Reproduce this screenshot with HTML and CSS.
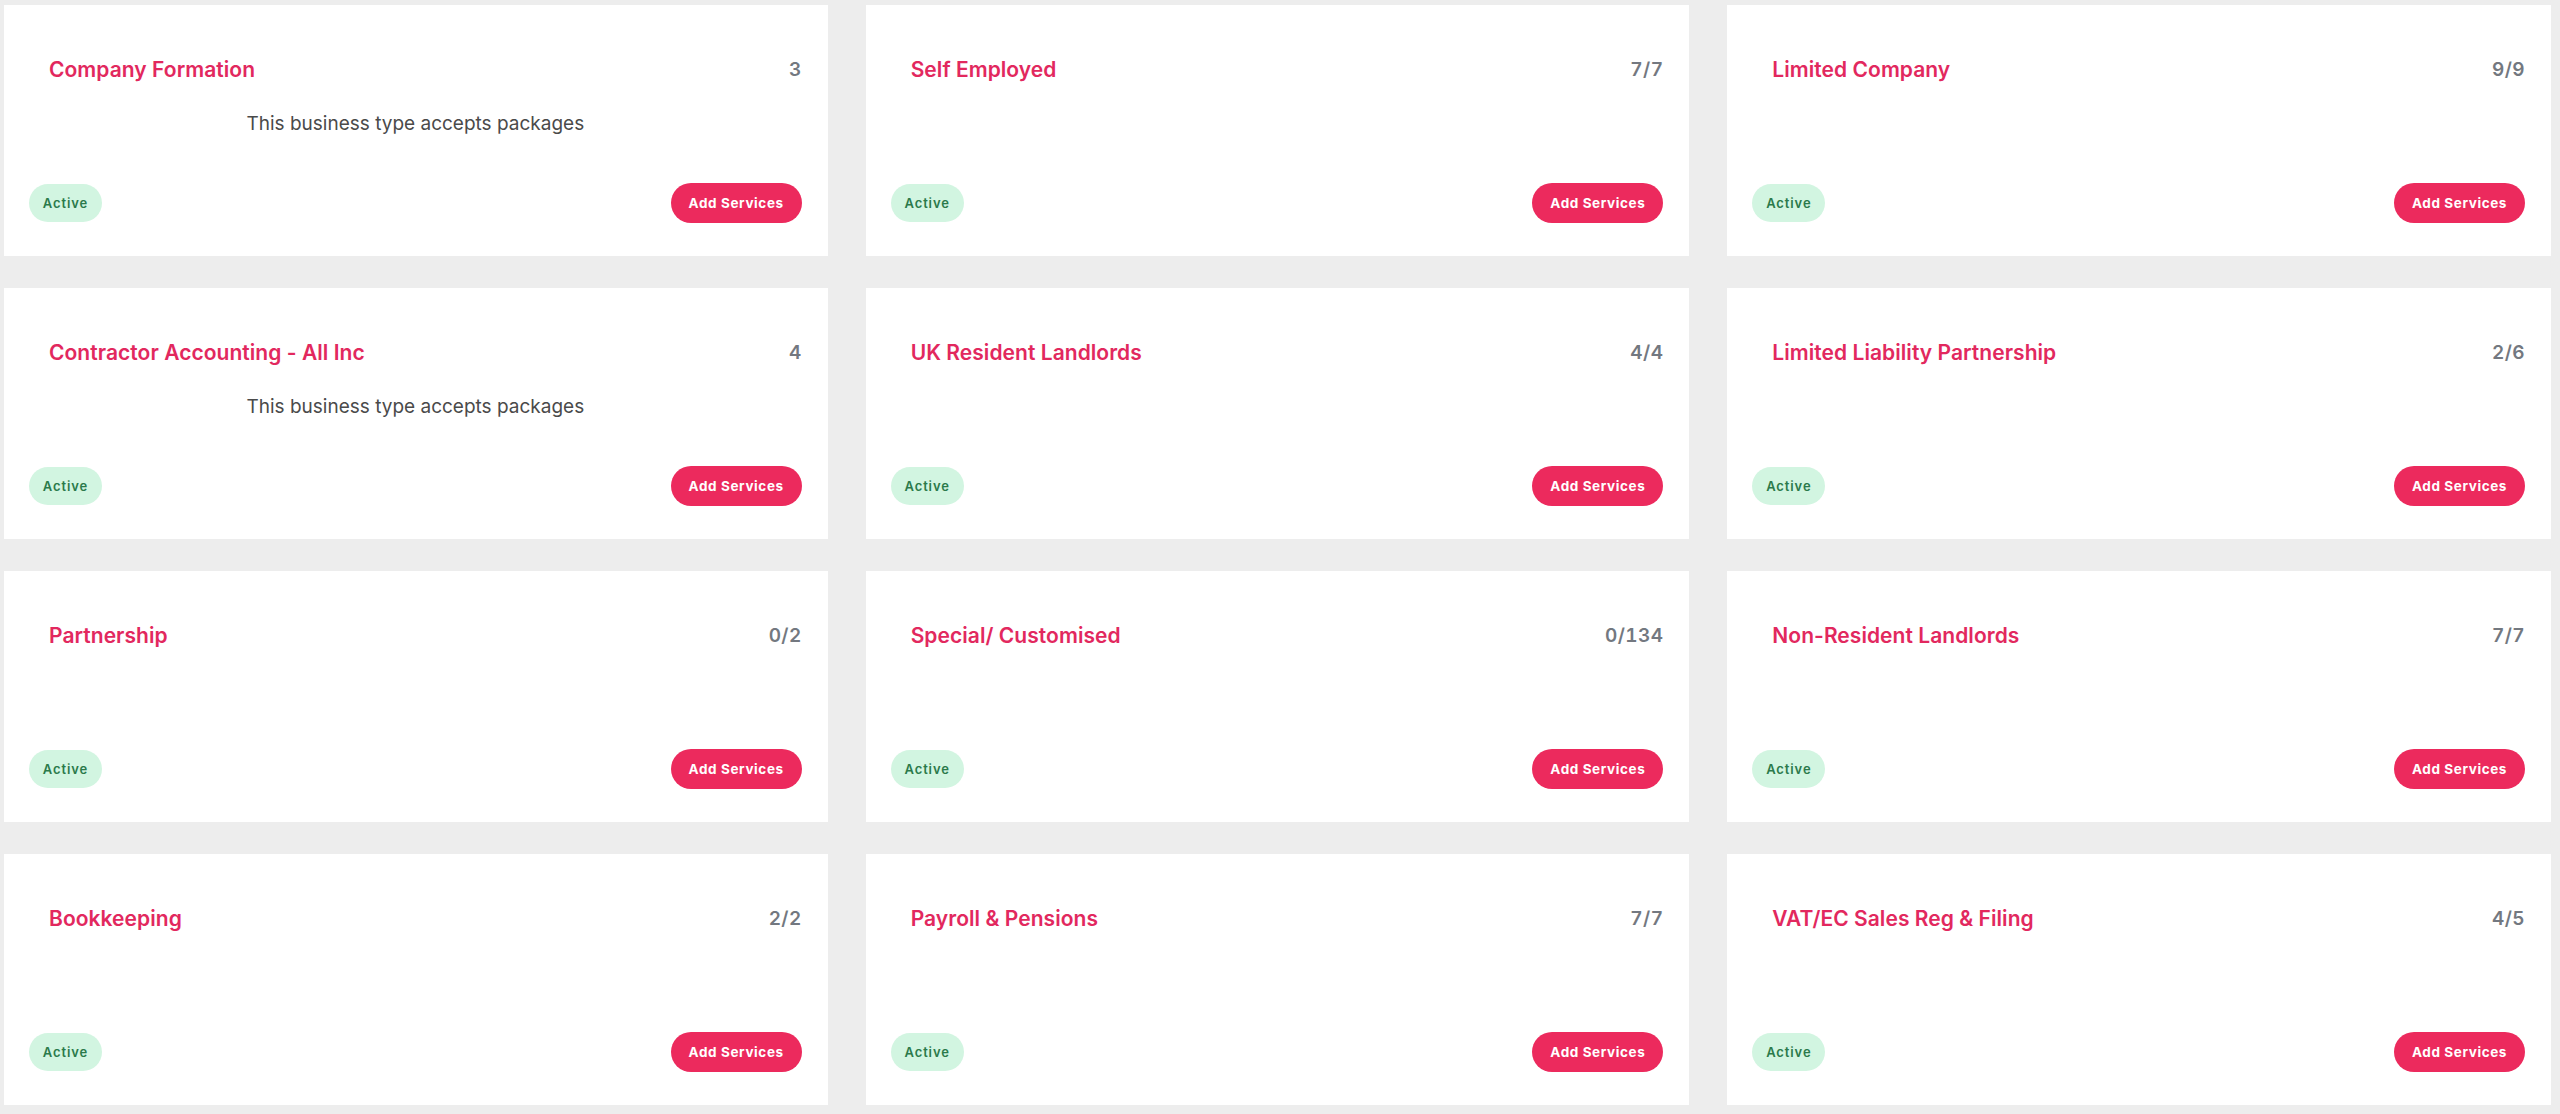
FILE: index.html
```html
<!DOCTYPE html>
<html lang="en">
<head>
<meta charset="utf-8">
<title>Business Types</title>
<link rel="stylesheet" href="styles.css">
</head>
<body>
<main class="grid">
  <section class="card">
    <div class="card-head"><h3 class="title">Company Formation</h3><span class="count">3</span></div>
    <p class="desc">This business type accepts packages</p>
    <div class="card-foot"><span class="pill">Active</span><button class="btn">Add Services</button></div>
  </section>
  <section class="card">
    <div class="card-head"><h3 class="title">Self Employed</h3><span class="count">7/7</span></div>
    <div class="card-foot"><span class="pill">Active</span><button class="btn">Add Services</button></div>
  </section>
  <section class="card">
    <div class="card-head"><h3 class="title">Limited Company</h3><span class="count">9/9</span></div>
    <div class="card-foot"><span class="pill">Active</span><button class="btn">Add Services</button></div>
  </section>

  <section class="card">
    <div class="card-head"><h3 class="title">Contractor Accounting - All Inc</h3><span class="count">4</span></div>
    <p class="desc">This business type accepts packages</p>
    <div class="card-foot"><span class="pill">Active</span><button class="btn">Add Services</button></div>
  </section>
  <section class="card">
    <div class="card-head"><h3 class="title">UK Resident Landlords</h3><span class="count">4/4</span></div>
    <div class="card-foot"><span class="pill">Active</span><button class="btn">Add Services</button></div>
  </section>
  <section class="card">
    <div class="card-head"><h3 class="title">Limited Liability Partnership</h3><span class="count">2/6</span></div>
    <div class="card-foot"><span class="pill">Active</span><button class="btn">Add Services</button></div>
  </section>

  <section class="card">
    <div class="card-head"><h3 class="title">Partnership</h3><span class="count">0/2</span></div>
    <div class="card-foot"><span class="pill">Active</span><button class="btn">Add Services</button></div>
  </section>
  <section class="card">
    <div class="card-head"><h3 class="title">Special/ Customised</h3><span class="count">0/134</span></div>
    <div class="card-foot"><span class="pill">Active</span><button class="btn">Add Services</button></div>
  </section>
  <section class="card">
    <div class="card-head"><h3 class="title">Non-Resident Landlords</h3><span class="count">7/7</span></div>
    <div class="card-foot"><span class="pill">Active</span><button class="btn">Add Services</button></div>
  </section>

  <section class="card">
    <div class="card-head"><h3 class="title">Bookkeeping</h3><span class="count">2/2</span></div>
    <div class="card-foot"><span class="pill">Active</span><button class="btn">Add Services</button></div>
  </section>
  <section class="card">
    <div class="card-head"><h3 class="title">Payroll &amp; Pensions</h3><span class="count">7/7</span></div>
    <div class="card-foot"><span class="pill">Active</span><button class="btn">Add Services</button></div>
  </section>
  <section class="card">
    <div class="card-head"><h3 class="title">VAT/EC Sales Reg &amp; Filing</h3><span class="count">4/5</span></div>
    <div class="card-foot"><span class="pill">Active</span><button class="btn">Add Services</button></div>
  </section>
</main>
</body>
</html>
```
FILE: styles.css
```css
* { box-sizing: border-box; }
html, body { margin: 0; padding: 0; }
body {
  background: #ededed;
  font-family: Inter, "Open Sans", "Liberation Sans", sans-serif;
  width: 2560px;
  height: 1114px;
  overflow: hidden;
}
.grid {
  display: grid;
  grid-template-columns: repeat(3, 1fr);
  grid-auto-rows: 251px;
  column-gap: 38px;
  row-gap: 32px;
  padding: 5px 9px 9px 4px;
}
.card {
  background: #ffffff;
  display: flex;
  flex-direction: column;
  padding: 0 26px 33px 25px;
}
.card-head {
  display: flex;
  align-items: center;
  justify-content: space-between;
  padding: 51px 0 0 20px;
  height: 78px;
}
.title {
  margin: 0;
  font-size: 21px;
  line-height: 26px;
  font-weight: 600;
  color: #e2285e;
  letter-spacing: 0.05px;
}
.count {
  font-size: 19px;
  line-height: 26px;
  font-weight: 600;
  color: #737880;
  font-variant-numeric: tabular-nums;
  letter-spacing: 0.4px;
}
.desc {
  margin: 28px 0 0 0;
  text-align: center;
  font-size: 19px;
  line-height: 26px;
  color: #4a4a4a;
  font-weight: 400;
}
.card-foot {
  margin-top: auto;
  display: flex;
  align-items: center;
  justify-content: space-between;
}
.pill {
  display: inline-flex;
  align-items: center;
  justify-content: center;
  height: 38px;
  width: 73px;
  border-radius: 19px;
  background: #d2f5e1;
  color: #2b7a4b;
  font-size: 13px;
  font-weight: 600;
  letter-spacing: 0.9px;
}
.btn {
  height: 40px;
  width: 131px;
  border: none;
  border-radius: 20px;
  background: #ec2a5d;
  color: #ffffff;
  font-family: inherit;
  font-size: 13.5px;
  font-weight: 700;
  letter-spacing: 0.6px;
  padding: 0;
  cursor: pointer;
}
```
